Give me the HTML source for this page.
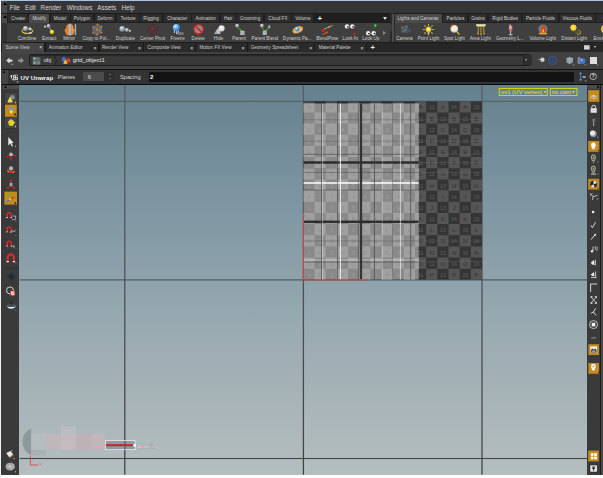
<!DOCTYPE html><html><head><meta charset="utf-8"><title>Houdini UV Unwrap</title><style>
html,body{margin:0;padding:0;}
body{width:603px;height:478px;overflow:hidden;background:#3a3a3a;position:relative;
 font-family:"Liberation Sans","DejaVu Sans",sans-serif;color:#cfcfcf;}
.a{position:absolute;}
.t{position:absolute;white-space:nowrap;line-height:1;}
.tab{position:absolute;top:14.2px;height:7.9px;background:#2d2d2d;border-radius:1.2px 1.2px 0 0;}
.tab.on{background:#4a4a4a;height:9px;}
.tab span,.ptab span,.lbl{position:absolute;white-space:nowrap;line-height:1;left:50%;transform:translateX(-50%);}
.tab span{top:2.7px;font-size:4.6px;color:#d2d2d2;}
.lbl{font-size:4.6px;color:#d0d0d0;top:36.7px;}
.ptab{position:absolute;top:43.2px;height:8.4px;background:#2b2b2b;box-shadow:-.9px 0 0 #1a1a1a, .9px 0 0 #1a1a1a;}
.ptab.on{background:#454545;top:42.6px;height:9.6px}
.ptab span{top:3.2px;font-size:4.6px;color:#cfcfcf;left:4px;transform:none;}
.ptab i{position:absolute;top:2.3px;font-size:5px;font-style:normal;color:#e8e8e8;line-height:1;margin-left:.3px;margin-top:.2px}
</style></head><body>
<div class="a" style="left:0;top:0;width:603px;height:1px;background:#a9c3e6"></div>
<div class="a" style="left:0;top:0;width:1.3px;height:478px;background:#e8e8e8"></div>
<div class="a" style="left:2px;top:1px;width:601px;height:12px;background:#353535"></div>
<div class="a" style="left:2px;top:1px;width:5px;height:12px;background:#4a4a4a"></div>
<div class="a" style="left:2.7px;top:2px;width:0;height:0;border-left:2px solid transparent;border-right:2px solid transparent;border-bottom:3.2px solid #000"></div>
<div class="a" style="left:14.72px;top:0;width:0;height:0"><span class="lbl" style="top:4.9px;font-size:6.3px;color:#d8d8d8">File</span></div>
<div class="a" style="left:30.40px;top:0;width:0;height:0"><span class="lbl" style="top:4.9px;font-size:6.3px;color:#d8d8d8">Edit</span></div>
<div class="a" style="left:50.95px;top:0;width:0;height:0"><span class="lbl" style="top:4.9px;font-size:6.3px;color:#d8d8d8">Render</span></div>
<div class="a" style="left:79.55px;top:0;width:0;height:0"><span class="lbl" style="top:4.9px;font-size:6.3px;color:#d8d8d8">Windows</span></div>
<div class="a" style="left:106.75px;top:0;width:0;height:0"><span class="lbl" style="top:4.9px;font-size:6.3px;color:#d8d8d8">Assets</span></div>
<div class="a" style="left:128.05px;top:0;width:0;height:0"><span class="lbl" style="top:4.9px;font-size:6.3px;color:#d8d8d8">Help</span></div>
<div class="a" style="left:2px;top:12.6px;width:601px;height:1.4px;background:#1c1c1c"></div>
<div class="a" style="left:2px;top:14px;width:601px;height:8.6px;background:#1f1f1f"></div>
<div class="a" style="left:2px;top:14px;width:5px;height:9px;background:#4a4a4a"></div>
<div class="a" style="left:2.7px;top:14.8px;width:0;height:0;border-left:2px solid transparent;border-right:2px solid transparent;border-bottom:3.2px solid #000"></div>
<div class="a" style="left:2px;top:23px;width:601px;height:19px;background:#3f3f3f"></div>
<div class="a" style="left:2px;top:23px;width:5.4px;height:19px;background:#323232"></div>
<div class="tab" style="left:8.4px;width:19.6px"><span>Create</span></div>
<div class="tab on" style="left:29.2px;width:20.2px"><span>Modify</span></div>
<div class="tab" style="left:50.6px;width:19.0px"><span>Model</span></div>
<div class="tab" style="left:70.8px;width:22.6px"><span>Polygon</span></div>
<div class="tab" style="left:94.6px;width:20.8px"><span>Deform</span></div>
<div class="tab" style="left:117.4px;width:21.5px"><span>Texture</span></div>
<div class="tab" style="left:140.2px;width:21.9px"><span>Rigging</span></div>
<div class="tab" style="left:164.1px;width:26.5px"><span>Character</span></div>
<div class="tab" style="left:192.2px;width:27.0px"><span>Animation</span></div>
<div class="tab" style="left:221px;width:14.5px"><span>Hair</span></div>
<div class="tab" style="left:236.9px;width:26.5px"><span>Grooming</span></div>
<div class="tab" style="left:264.8px;width:26.2px"><span>Cloud FX</span></div>
<div class="tab" style="left:292.2px;width:21.3px"><span>Volume</span></div>
<div class="t" style="left:317.6px;top:14.5px;font-size:8px;color:#eee;font-weight:bold">+</div>
<div class="a" style="left:382.5px;top:17px;width:0;height:0;border-left:2px solid transparent;border-right:2px solid transparent;border-top:3px solid #ddd"></div>
<div class="a" style="left:390px;top:13px;width:5px;height:30px;background:#2a2a2a"></div>
<div class="a" style="left:391.5px;top:14px;width:2px;height:28px;background:#4c4c4c"></div>
<div class="tab on" style="left:394.5px;width:47.2px"><span>Lights and Cameras</span></div>
<div class="tab" style="left:443.3px;width:24.2px"><span>Particles</span></div>
<div class="tab" style="left:468.9px;width:18.3px"><span>Grains</span></div>
<div class="tab" style="left:489px;width:32.4px"><span>Rigid Bodies</span></div>
<div class="tab" style="left:522.8px;width:35.2px"><span>Particle Fluids</span></div>
<div class="tab" style="left:559.6px;width:35.2px"><span>Viscous Fluids</span></div>
<div class="tab" style="left:596.4px;width:28.6px"><span>Oceans</span></div>
<div class="a" style="left:27.15px;top:0;width:0;height:0"><span class="lbl">Combine</span></div>
<div class="a" style="left:49.05px;top:0;width:0;height:0"><span class="lbl">Extract</span></div>
<div class="a" style="left:69.15px;top:0;width:0;height:0"><span class="lbl">Mirror</span></div>
<div class="a" style="left:96.3px;top:0;width:0;height:0"><span class="lbl">Copy to Poi...</span></div>
<div class="a" style="left:125.45px;top:0;width:0;height:0"><span class="lbl">Duplicate</span></div>
<div class="a" style="left:152.6px;top:0;width:0;height:0"><span class="lbl">Center Pivot</span></div>
<div class="a" style="left:177.55px;top:0;width:0;height:0"><span class="lbl">Freeze</span></div>
<div class="a" style="left:198.25px;top:0;width:0;height:0"><span class="lbl">Delete</span></div>
<div class="a" style="left:218.55px;top:0;width:0;height:0"><span class="lbl">Hide</span></div>
<div class="a" style="left:239.05px;top:0;width:0;height:0"><span class="lbl">Parent</span></div>
<div class="a" style="left:264.8px;top:0;width:0;height:0"><span class="lbl">Parent Blend</span></div>
<div class="a" style="left:297.15px;top:0;width:0;height:0"><span class="lbl">Dynamic Pa...</span></div>
<div class="a" style="left:327.25px;top:0;width:0;height:0"><span class="lbl">BlendPose</span></div>
<div class="a" style="left:350.25px;top:0;width:0;height:0"><span class="lbl">Look At</span></div>
<div class="a" style="left:370.85px;top:0;width:0;height:0"><span class="lbl">Look Up</span></div>
<div class="a" style="left:404.45px;top:0;width:0;height:0"><span class="lbl">Camera</span></div>
<div class="a" style="left:428.55px;top:0;width:0;height:0"><span class="lbl">Point Light</span></div>
<div class="a" style="left:454.45px;top:0;width:0;height:0"><span class="lbl">Spot Light</span></div>
<div class="a" style="left:480.25px;top:0;width:0;height:0"><span class="lbl">Area Light</span></div>
<div class="a" style="left:509.85px;top:0;width:0;height:0"><span class="lbl">Geometry L...</span></div>
<div class="a" style="left:542.7px;top:0;width:0;height:0"><span class="lbl">Volume Light</span></div>
<div class="a" style="left:574.15px;top:0;width:0;height:0"><span class="lbl">Distant Light</span></div>
<div class="a" style="left:612px;top:0;width:0;height:0"><span class="lbl">Environment Light</span></div>
<svg class="a" style="left:0;top:0" width="603" height="44" viewBox="0 0 603 44">
<defs><radialGradient id="gs" cx=".35" cy=".3" r=".8"><stop offset="0" stop-color="#e8ecee"/><stop offset=".55" stop-color="#9aa2a6"/><stop offset="1" stop-color="#5a6064"/></radialGradient><radialGradient id="ys" cx=".35" cy=".3" r=".8"><stop offset="0" stop-color="#fff8a0"/><stop offset=".6" stop-color="#e8d020"/><stop offset="1" stop-color="#9a8400"/></radialGradient><radialGradient id="bs" cx=".35" cy=".3" r=".8"><stop offset="0" stop-color="#d8f0ff"/><stop offset=".55" stop-color="#4aa0e8"/><stop offset="1" stop-color="#1c58a8"/></radialGradient><radialGradient id="ws" cx=".4" cy=".35" r=".8"><stop offset="0" stop-color="#fff"/><stop offset=".7" stop-color="#d8d8d8"/><stop offset="1" stop-color="#888"/></radialGradient><radialGradient id="pl" cx=".5" cy=".5" r=".5"><stop offset="0" stop-color="#fffff0"/><stop offset=".5" stop-color="#f0e050"/><stop offset="1" stop-color="#c8a818"/></radialGradient></defs>
<ellipse cx="27.4" cy="30.9" rx="5.5" ry="2.7" fill="none" stroke="#d8c018" stroke-width=".9"/><circle cx="25.6" cy="28.6" r="2.6" fill="url(#gs)"/><path d="M28.4 30 L30.2 26.4 L31.8 30.2Z" fill="#d0d4d8"/><path d="M22.2 31.6 A5.5 2.7 0 0 0 32.6 31.6" fill="none" stroke="#f0d820" stroke-width="1"/><path d="M28.8 32.6 L31.8 34 L30.4 31.8Z" fill="#e0e0e0"/>
<path d="M48.6 26.4 L52 31.8" stroke="#a8a8a8" stroke-width=".9"/><circle cx="45.2" cy="26.8" r="1.3" fill="url(#gs)"/><circle cx="48.6" cy="26" r="1.9" fill="url(#gs)"/><circle cx="52" cy="32" r="2.3" fill="url(#ys)" stroke="#5a4c00" stroke-width=".3"/>
<path d="M68.8 24 C66.6 24.6 65.6 26.4 66.4 28 C64.2 29 64 31 65.6 32.2 C65 33.8 66.6 35 68.8 35.2Z" fill="#e8822a"/><rect x="68.6" y="23.8" width="2.7" height="11.5" fill="#c8ccd0"/><rect x="69.7" y="23.8" width=".7" height="11.5" fill="#8a9094"/><path d="M71.2 24 C73 24.6 73.8 26.4 73.2 28 C75 29 75 31 73.8 32.2 C74.2 33.8 73 35 71.2 35.2Z" fill="#f09436"/><rect x="74.7" y="24.2" width="1.5" height="10.8" fill="#a8acb0"/>
<path d="M93 27 L97.6 24.6 L101.6 26.6 V32.6 L97 35 L93 32.8Z" fill="#5e6266" stroke="#8a8e92" stroke-width=".5"/><path d="M93 27 L97 29 L101.6 26.6 M97 29 V35" stroke="#8a8e92" stroke-width=".5" fill="none"/>
<circle cx="93" cy="27" r=".8" fill="#ee8a1c"/>
<circle cx="97.6" cy="24.4" r=".8" fill="#ee8a1c"/>
<circle cx="101.6" cy="26.6" r=".8" fill="#ee8a1c"/>
<circle cx="101.6" cy="32.6" r=".8" fill="#ee8a1c"/>
<circle cx="97" cy="35" r=".8" fill="#ee8a1c"/>
<circle cx="93" cy="32.8" r=".8" fill="#ee8a1c"/>
<circle cx="97" cy="29.4" r=".8" fill="#ee8a1c"/>
<circle cx="99.4" cy="30.6" r=".8" fill="#ee8a1c"/>
<circle cx="122.3" cy="28.9" r="2.9" fill="url(#gs)"/><circle cx="127" cy="30" r="2" fill="url(#gs)"/><circle cx="130" cy="31" r="1.2" fill="url(#gs)"/>
<g stroke="#702020" stroke-width=".65" fill="none"><circle cx="152.8" cy="29.6" r="5"/><path d="M152.8 24.6V34.6M147.8 29.6H157.8" stroke-dasharray="1 .8"/><ellipse cx="152.8" cy="29.6" rx="2.4" ry="5" opacity=".6"/></g><circle cx="152.4" cy="29" r=".9" fill="#b82a2a"/>
<circle cx="176.4" cy="27.7" r="3.6" fill="url(#bs)"/><path d="M174.4 30.4V33M176.6 31V34M178.4 30.6V32.6" stroke="#e8f4ff" stroke-width=".8"/><text x="177" y="35" font-size="3.2" fill="#9a9a9a" font-family="Liberation Sans, sans-serif" font-weight="bold">RBS</text>
<circle cx="198.6" cy="29.3" r="4.7" fill="#8c8c8c" stroke="#d81e1e" stroke-width="1.3"/><path d="M195.2 26 L202 32.6" stroke="#d81e1e" stroke-width="1.5"/>
<path d="M214 34 L218 27.6 L221 34Z" fill="#a8acae"/><circle cx="221.6" cy="28.4" r="3.1" fill="url(#ws)"/><circle cx="218.4" cy="31.6" r="1.8" fill="#c8c8c8" opacity=".8"/>
<path d="M237.6 27 C238.4 30.2 241.4 28.6 242.4 31.4" stroke="#52b424" stroke-width="1" fill="none"/><circle cx="237.2" cy="25.8" r="2" fill="url(#gs)"/><rect x="240.6" y="31" width="3.6" height="3.8" fill="#a8b0b6" stroke="#d0d6da" stroke-width=".4"/>
<path d="M262.2 27 C262.6 30 264.8 29.4 264.8 31.4 M269 28 C268.6 30 265.4 29.4 264.8 31.4" stroke="#52b424" stroke-width="1" fill="none"/><circle cx="262" cy="25.8" r="2" fill="url(#gs)"/><path d="M267.6 27.8 L269.2 24.6 L270.8 27.8Z" fill="#b0b6ba"/><rect x="263" y="31" width="3.6" height="3.8" fill="#a8b0b6" stroke="#d0d6da" stroke-width=".4"/>
<ellipse cx="297.8" cy="29.8" rx="5.6" ry="3.3" transform="rotate(-22 297.8 29.8)" fill="#e8a648"/><ellipse cx="297.8" cy="30.2" rx="3.6" ry="1.8" transform="rotate(-22 297.8 29.8)" fill="#f8d8a0" opacity=".7"/><circle cx="297.2" cy="29.2" r="2.3" fill="url(#bs)"/>
<path d="M324 29.2 L332.6 25.4" stroke="#d8a050" stroke-width=".9"/><circle cx="329" cy="27" r=".7" fill="#e8c080"/><circle cx="323" cy="30.6" r="1.6" fill="#d82020"/><path d="M322.4 34.6 L327.6 32 L326.4 31 M327.6 32 L326 33.6" stroke="#e85a10" stroke-width="1" fill="none"/>
<path d="M347 27 L354.4 33.8 L352.3 27" stroke="#7a2424" stroke-width=".5" fill="none"/><circle cx="347" cy="26.4" r="2.2" fill="#f2f2f2"/><circle cx="352.3" cy="26.4" r="2.2" fill="#f2f2f2"/><circle cx="347.8" cy="26.8" r=".9" fill="#222"/><circle cx="353.1" cy="26.8" r=".9" fill="#222"/><path d="M354.4 32.4l1.1 1.4l-1.1 1.4l-1.1-1.4z" fill="#e82828"/>
<path d="M370.8 32 L375.3 25.6" stroke="#3a9a2a" stroke-width=".5" stroke-dasharray="1 .7"/><path d="M375.3 23.8l1.6 1.7l-1.6 1.7l-1.6-1.7z" fill="#38d038"/><circle cx="368.2" cy="33.2" r="2.2" fill="#f2f2f2"/><circle cx="373.7" cy="33.2" r="2.2" fill="#f2f2f2"/><circle cx="369" cy="33.6" r=".9" fill="#222"/><circle cx="374.5" cy="33.6" r=".9" fill="#222"/>
<rect x="401" y="28" width="7" height="5" rx="1" fill="#4a5560"/><circle cx="402.6" cy="27.4" r="1.7" fill="#56626e"/><circle cx="406.2" cy="27" r="2" fill="#56626e"/><path d="M408 29.4 L410.4 28 V33 L408 31.8Z" fill="#4a5560"/><circle cx="405" cy="30.4" r=".7" fill="#9ab0c0"/><circle cx="403" cy="31.6" r=".5" fill="#8aa0b0"/>
<path d="M431.5 29.5L433.7 29.5" stroke="#d8c030" stroke-width=".7"/><circle cx="433.7" cy="29.5" r=".6" fill="#e8d040"/>
<path d="M430.6 31.6L432.2 33.2" stroke="#d8c030" stroke-width=".7"/><circle cx="432.2" cy="33.2" r=".6" fill="#e8d040"/>
<path d="M428.5 32.5L428.5 34.7" stroke="#d8c030" stroke-width=".7"/><circle cx="428.5" cy="34.7" r=".6" fill="#e8d040"/>
<path d="M426.4 31.6L424.8 33.2" stroke="#d8c030" stroke-width=".7"/><circle cx="424.8" cy="33.2" r=".6" fill="#e8d040"/>
<path d="M425.5 29.5L423.3 29.5" stroke="#d8c030" stroke-width=".7"/><circle cx="423.3" cy="29.5" r=".6" fill="#e8d040"/>
<path d="M426.4 27.4L424.8 25.8" stroke="#d8c030" stroke-width=".7"/><circle cx="424.8" cy="25.8" r=".6" fill="#e8d040"/>
<path d="M428.5 26.5L428.5 24.3" stroke="#d8c030" stroke-width=".7"/><circle cx="428.5" cy="24.3" r=".6" fill="#e8d040"/>
<path d="M430.6 27.4L432.2 25.8" stroke="#d8c030" stroke-width=".7"/><circle cx="432.2" cy="25.8" r=".6" fill="#e8d040"/>
<circle cx="428.5" cy="29.3" r="2.9" fill="url(#pl)"/><rect x="427.4" y="32.2" width="2.2" height="1.6" fill="#c8c8b0"/>
<path d="M455.6 30.4 L459.6 34.6" stroke="#f0d020" stroke-width="1.1"/><circle cx="454.3" cy="28.9" r="3.8" fill="url(#ws)"/><path d="M450.8 27.6 A3.8 3.8 0 0 1 454 25.1" stroke="#f08a20" stroke-width="1.2" fill="none"/><circle cx="454.6" cy="29.2" r="1.6" fill="#f8f0c0"/><path d="M451.6 31.6 A3.8 3.8 0 0 0 456 32.4" stroke="#777" stroke-width=".8" fill="none"/>
<path d="M475.8 24.3 H486 L485 26.4 H476.8Z" fill="#f4ecb0"/><path d="M478.4 26.6 L478 33.6 M481 26.6 V34.4 M483.6 26.6 L484 33.6" stroke="#d8b830" stroke-width=".8"/><circle cx="478" cy="33.8" r=".7" fill="#e8c838"/><circle cx="481" cy="34.6" r=".7" fill="#e8c838"/><circle cx="484" cy="33.8" r=".7" fill="#e8c838"/>
<ellipse cx="510.6" cy="28.4" rx="2.3" ry="4.2" fill="#7a3a8a"/><ellipse cx="510.2" cy="27.6" rx="1.2" ry="2.6" fill="#e8e0d0" opacity=".7"/><path d="M509.6 24.6 C512.6 26.6 512 30 510 32" stroke="#f0c830" stroke-width="1" fill="none"/><circle cx="511.2" cy="29.6" r="1" fill="#f07020"/><path d="M510.6 31.4 V34.6 M508.8 34.8 H512.4" stroke="#e8e8e8" stroke-width=".8"/>
<circle cx="543" cy="29" r="4.6" fill="#8a8e92" opacity=".75"/><ellipse cx="543" cy="33.6" rx="4.4" ry="1" fill="#e8a020"/><path d="M543 24.8 C545.4 27.4 545.8 29.4 545 31.6 C544.4 33.2 541.6 33.2 541 31.6 C540.2 29.6 542 28.6 543 24.8Z" fill="#e83a18"/><path d="M543 28.4 C544.2 30 544.2 31 543.8 32 C543.4 32.8 542.4 32.8 542.2 32 C541.8 30.8 542.6 30.2 543 28.4Z" fill="#f8c030"/>
<polygon points="577.1,27.7 576.0,28.8 576.0,30.3 574.5,30.3 573.4,31.4 572.3,30.3 570.8,30.3 570.8,28.8 569.7,27.7 570.8,26.6 570.8,25.1 572.3,25.1 573.4,24.0 574.5,25.1 576.0,25.1 576.0,26.6" fill="#e8c020"/><circle cx="573.2" cy="27.5" r="2.2" fill="#f8e060"/>
<path d="M575.4 31.6 L578 34.6 M576.8 30.4 L580 33.8 M578 29 L580.8 32" stroke="#c8a820" stroke-width=".6"/><circle cx="578" cy="34.6" r=".6" fill="#e8c838"/><circle cx="580" cy="33.8" r=".6" fill="#e8c838"/><circle cx="580.8" cy="32" r=".6" fill="#e8c838"/>
<circle cx="606" cy="29" r="5" fill="#e8c848"/>
<path d="M390.9 24.4V31" stroke="#5a5a5a" stroke-width="1.4" stroke-dasharray="1 1"/>
</svg>
<div class="a" style="left:382.5px;top:31px;width:0;height:0;border-top:2.5px solid transparent;border-bottom:2.5px solid transparent;border-left:3.5px solid #8a8a8a"></div>
<div class="a" style="left:2px;top:41.6px;width:601px;height:1.2px;background:#1c1c1c"></div>
<div class="a" style="left:2px;top:42.8px;width:601px;height:9.4px;background:#262626"></div>
<div class="ptab on" style="left:2px;width:42.3px"><span style="left:3.5px">Scene View</span><i style="left:36.9px">×</i></div>
<div class="ptab" style="left:45.6px;width:52.8px"><span style="left:3.2px">Animation Editor</span><i style="left:47.6px">×</i></div>
<div class="ptab" style="left:99.6px;width:43.6px"><span style="left:2.4px">Render View</span><i style="left:38.1px">×</i></div>
<div class="ptab" style="left:144.4px;width:50.8px"><span style="left:3.2px">Composite View</span><i style="left:45.5px">×</i></div>
<div class="ptab" style="left:196.4px;width:50.2px"><span style="left:3.0px">Motion FX View</span><i style="left:44.7px">×</i></div>
<div class="ptab" style="left:247.8px;width:66.4px"><span style="left:2.9px">Geometry Spreadsheet</span><i style="left:61.1px">×</i></div>
<div class="ptab" style="left:315.4px;width:50.2px"><span style="left:3.3px">Material Palette</span><i style="left:44.7px">×</i></div>
<div class="t" style="left:370.4px;top:44px;font-size:7.5px;color:#eee;font-weight:bold">+</div>
<svg class="a" style="left:583px;top:44px" width="8" height="7" viewBox="0 0 8 7"><rect x="1" y="1.3" width="5.6" height="4.2" fill="#e8e8e8"/><path d="M1 2.7h5.6M1 4.1h5.6" stroke="#999" stroke-width=".4"/></svg>
<div class="a" style="left:594.3px;top:45.9px;width:0;height:0;border-left:1.7px solid transparent;border-right:1.7px solid transparent;border-top:2.3px solid #e0e0e0"></div>
<div class="a" style="left:2px;top:52px;width:601px;height:17px;background:#414141"></div>
<div class="a" style="left:2px;top:51.5px;width:42.3px;height:2px;background:#454545"></div>
<div class="a" style="left:29.4px;top:54.4px;width:502px;height:11.6px;background:#393939;border:0.8px solid #1f1f1f;border-radius:2px;box-sizing:border-box;box-shadow:inset 0 1px 1px rgba(0,0,0,.35)"></div>
<div class="a" style="left:522.6px;top:55.2px;width:8.2px;height:10px;background:#2e2e2e;border-left:.6px solid #222"></div>
<div class="a" style="left:525.4px;top:59.2px;width:0;height:0;border-left:1.9px solid transparent;border-right:1.9px solid transparent;border-top:2.4px solid #aaa"></div>
<svg class="a" style="left:4px;top:55px" width="24" height="12" viewBox="0 0 24 12"><path d="M2.2 5.6 L5.6 2.6 V4.4 H8.4 V6.8 H5.6 V8.6 Z" fill="#d8d8d8"/><path d="M7.6 8.2 L9.2 9.2 L7.6 10.2Z" fill="#bbb"/><path d="M20 5.6 L16.6 2.6 V4.4 H14 V6.8 H16.6 V8.6 Z" fill="#8e8e8e"/></svg>
<svg class="a" style="left:32px;top:56px" width="10" height="10" viewBox="0 0 10 10"><rect x=".8" y="1.2" width="7.6" height="7.6" fill="#5d6a6a"/><rect x="1.2" y="1.4" width="2.2" height="2" fill="#9fb0b0"/><rect x="1.2" y="5.6" width="2.4" height="2.4" fill="#8fa0a0"/><rect x="5" y="5.8" width="2.8" height="2" fill="#7d8c8c"/><path d="M3.6 2.4H6.4" stroke="#aaa" stroke-width=".5" stroke-dasharray=".8 .6"/></svg>
<div class="t" style="left:43.8px;top:57.6px;font-size:5.5px;color:#e0e0e0">obj</div>
<svg class="a" style="left:53px;top:54.5px" width="5" height="12" viewBox="0 0 5 12"><path d="M1.4 .8 L3.6 5.8 L1.4 10.8" fill="none" stroke="#1c1c1c" stroke-width=".8"/></svg>
<svg class="a" style="left:61px;top:56px" width="11" height="10" viewBox="0 0 11 10"><rect x="1" y="1.2" width="3.6" height="4.4" fill="#3f6fd0"/><circle cx="7.2" cy="4.6" r="2.2" fill="#e03a2a"/><path d="M4.4 3.2 L6.6 7.8 H2.2Z" fill="#f2d428"/></svg>
<div class="t" style="left:72.8px;top:57.5px;font-size:5.85px;color:#ececec">grid_object1</div>
<svg class="a" style="left:536px;top:55px" width="66" height="12" viewBox="0 0 66 12"><path d="M2.6 4.6H5.2M5.2 2.6V6.8M5.2 3.2H8V6.2H5.2" stroke="#d8d8d8" stroke-width=".8" fill="#d8d8d8"/><circle cx="16.4" cy="5.4" r="4" fill="#2c3442" stroke="#4a6db0" stroke-width=".7"/><circle cx="16.4" cy="5.4" r="2.3" fill="none" stroke="#4a6db0" stroke-width=".6"/><circle cx="16.4" cy="5.4" r=".8" fill="#4a6db0"/><path d="M30.4 3.2 L33.8 1.8 L37 3.2 V7.4 L33.6 9 L30.4 7.4Z" fill="#8a98a8"/><path d="M30.4 3.2 L33.6 4.6 L37 3.2 M33.6 4.6 V9" stroke="#c8d0d8" stroke-width=".5" fill="none"/><path d="M36.4 9.4h2.2l-1.1 1.2z" fill="#aaa"/><rect x="41.6" y="2" width="3" height="7" rx="1.2" fill="#8a8a8a"/><circle cx="46.4" cy="6" r="3" fill="#3f78d8"/><circle cx="45.6" cy="5" r="1" fill="#9cc0f4"/><path d="M48.2 9.4h2.2l-1.1 1.2z" fill="#aaa"/><rect x="54" y="2" width="7" height="7" fill="#dcdcdc"/><path d="M60.4 9.4h2l-1 1.2z" fill="#aaa"/></svg>
<div class="a" style="left:2px;top:68.6px;width:601px;height:1.2px;background:#121212"></div>
<div class="a" style="left:2px;top:69.8px;width:601px;height:14.1px;background:#333"></div>
<div class="a" style="left:2px;top:69.8px;width:5.6px;height:14.1px;background:#454545"></div>
<div class="a" style="left:3px;top:70.2px;width:0;height:0;border-left:1.9px solid transparent;border-right:1.9px solid transparent;border-bottom:3px solid #000"></div>
<svg class="a" style="left:9px;top:72.6px" width="11" height="11" viewBox="0 0 11 11"><path d="M1.4 3H3.4M2.4 2V5.4M4.6 2.2H6.6V4.4H8.6V6.6H6.6V4.4H4.6Z M4.6 4.4V6.8H6.4" stroke="#ececec" stroke-width=".9" fill="none"/><path d="M3 5.6L4.4 7.4M7.6 1.6L8.8 3" stroke="#ececec" stroke-width=".8"/><path d="M7.4 8.6h2.4l-1.2 1.4z" fill="#bbb"/></svg>
<div class="t" style="left:20.6px;top:74.7px;font-size:6.1px;font-weight:bold;color:#f4f4f4">UV Unwrap</div>
<div class="t" style="left:57.8px;top:75px;font-size:5.7px;color:#d4d4d4">Planes</div>
<div class="a" style="left:82.5px;top:71.9px;width:32.5px;height:9.4px;background:#2f2f2f;border-radius:1px"></div>
<div class="a" style="left:82.5px;top:71.9px;width:21.6px;height:9.4px;background:#4b4b4b;border-radius:1px 0 0 1px"></div>
<div class="t" style="left:87.7px;top:74.4px;font-size:6px;color:#d8d8d8">6</div>
<div class="a" style="left:108.9px;top:73.8px;width:0;height:0;border-left:1.1px solid transparent;border-right:1.1px solid transparent;border-bottom:1.8px solid #9a9a9a"></div>
<div class="a" style="left:108.9px;top:77.6px;width:0;height:0;border-left:1.1px solid transparent;border-right:1.1px solid transparent;border-top:1.8px solid #9a9a9a"></div>
<div class="t" style="left:120px;top:75px;font-size:5.7px;color:#d4d4d4">Spacing</div>
<div class="a" style="left:148.9px;top:72px;width:425px;height:9.6px;background:#131313;border-radius:1px"></div>
<div class="t" style="left:150px;top:74.3px;font-size:6px;color:#fff;font-weight:bold">2</div>
<svg class="a" style="left:576px;top:71px" width="24" height="12" viewBox="0 0 24 12"><path d="M4.6 1.6V9.6M3.4 3.2L4.6 1.4L5.8 3.2M3.4 8L4.6 9.8L5.8 8" stroke="#5b8fe0" stroke-width=".8" fill="none"/><rect x="6.6" y="5.4" width="3" height="1.2" fill="#e8e8e8"/><path d="M8.6 9.6h2.2l-1.1 1.2z" fill="#aaa"/><circle cx="17.2" cy="5.4" r="3.2" fill="#2a2a2a" stroke="#d0d0d0" stroke-width=".8"/><text x="17.2" y="7.2" font-size="4.6" font-weight="bold" text-anchor="middle" fill="#e8e8e8" font-family="Liberation Sans, sans-serif">?</text></svg>
<div class="a" style="left:2px;top:83.9px;width:601px;height:1px;background:#0a0a0a"></div>
<div class="a" style="left:19.4px;top:84.75px;width:567.8px;height:390px;background:linear-gradient(#66818e 0%,#7d96a2 30%,#99aab1 62%,#b5bebf 100%)"></div>
<svg class="a" style="left:0;top:0" width="603" height="478" viewBox="0 0 603 478" font-family="Liberation Sans, sans-serif">
<defs><clipPath id="vp"><rect x="19.4" y="85" width="567.8" height="389.7"/></clipPath><clipPath id="tile"><rect x="303.4" y="100.8" width="178.6" height="178.9"/></clipPath><clipPath id="lt"><rect x="303.4" y="103.5" width="115.45000000000005" height="176.1"/></clipPath></defs>
<g clip-path="url(#vp)">
<linearGradient id="gv" x1="0" y1="85" x2="0" y2="475" gradientUnits="userSpaceOnUse"><stop offset="0" stop-color="#555e66"/><stop offset="1" stop-color="#434445"/></linearGradient>
<rect x="124.15" y="84" width="1.3" height="392" fill="url(#gv)"/>
<rect x="302.75" y="84" width="1.3" height="392" fill="url(#gv)"/>
<rect x="481.35" y="84" width="1.3" height="392" fill="url(#gv)"/>
<rect x="19.4" y="100.75" width="568" height="1.1" fill="#545d65"/>
<rect x="19.4" y="279.35" width="568" height="1.1" fill="#4b5055"/>
<rect x="19.4" y="457.95" width="568" height="1.1" fill="#444546"/>
<g clip-path="url(#tile)">
<rect x="303.4" y="101.3" width="178.6" height="178.6" fill="#353535"/>
<path d="M303.40 101.30h11.16v11.16h-11.16zM325.72 101.30h11.16v11.16h-11.16zM348.05 101.30h11.16v11.16h-11.16zM370.38 101.30h11.16v11.16h-11.16zM392.70 101.30h11.16v11.16h-11.16zM415.02 101.30h11.16v11.16h-11.16zM437.35 101.30h11.16v11.16h-11.16zM459.67 101.30h11.16v11.16h-11.16zM314.56 112.46h11.16v11.16h-11.16zM336.89 112.46h11.16v11.16h-11.16zM359.21 112.46h11.16v11.16h-11.16zM381.54 112.46h11.16v11.16h-11.16zM403.86 112.46h11.16v11.16h-11.16zM426.19 112.46h11.16v11.16h-11.16zM448.51 112.46h11.16v11.16h-11.16zM470.84 112.46h11.16v11.16h-11.16zM303.40 123.62h11.16v11.16h-11.16zM325.72 123.62h11.16v11.16h-11.16zM348.05 123.62h11.16v11.16h-11.16zM370.38 123.62h11.16v11.16h-11.16zM392.70 123.62h11.16v11.16h-11.16zM415.02 123.62h11.16v11.16h-11.16zM437.35 123.62h11.16v11.16h-11.16zM459.67 123.62h11.16v11.16h-11.16zM314.56 134.79h11.16v11.16h-11.16zM336.89 134.79h11.16v11.16h-11.16zM359.21 134.79h11.16v11.16h-11.16zM381.54 134.79h11.16v11.16h-11.16zM403.86 134.79h11.16v11.16h-11.16zM426.19 134.79h11.16v11.16h-11.16zM448.51 134.79h11.16v11.16h-11.16zM470.84 134.79h11.16v11.16h-11.16zM303.40 145.95h11.16v11.16h-11.16zM325.72 145.95h11.16v11.16h-11.16zM348.05 145.95h11.16v11.16h-11.16zM370.38 145.95h11.16v11.16h-11.16zM392.70 145.95h11.16v11.16h-11.16zM415.02 145.95h11.16v11.16h-11.16zM437.35 145.95h11.16v11.16h-11.16zM459.67 145.95h11.16v11.16h-11.16zM314.56 157.11h11.16v11.16h-11.16zM336.89 157.11h11.16v11.16h-11.16zM359.21 157.11h11.16v11.16h-11.16zM381.54 157.11h11.16v11.16h-11.16zM403.86 157.11h11.16v11.16h-11.16zM426.19 157.11h11.16v11.16h-11.16zM448.51 157.11h11.16v11.16h-11.16zM470.84 157.11h11.16v11.16h-11.16zM303.40 168.27h11.16v11.16h-11.16zM325.72 168.27h11.16v11.16h-11.16zM348.05 168.27h11.16v11.16h-11.16zM370.38 168.27h11.16v11.16h-11.16zM392.70 168.27h11.16v11.16h-11.16zM415.02 168.27h11.16v11.16h-11.16zM437.35 168.27h11.16v11.16h-11.16zM459.67 168.27h11.16v11.16h-11.16zM314.56 179.44h11.16v11.16h-11.16zM336.89 179.44h11.16v11.16h-11.16zM359.21 179.44h11.16v11.16h-11.16zM381.54 179.44h11.16v11.16h-11.16zM403.86 179.44h11.16v11.16h-11.16zM426.19 179.44h11.16v11.16h-11.16zM448.51 179.44h11.16v11.16h-11.16zM470.84 179.44h11.16v11.16h-11.16zM303.40 190.60h11.16v11.16h-11.16zM325.72 190.60h11.16v11.16h-11.16zM348.05 190.60h11.16v11.16h-11.16zM370.38 190.60h11.16v11.16h-11.16zM392.70 190.60h11.16v11.16h-11.16zM415.02 190.60h11.16v11.16h-11.16zM437.35 190.60h11.16v11.16h-11.16zM459.67 190.60h11.16v11.16h-11.16zM314.56 201.76h11.16v11.16h-11.16zM336.89 201.76h11.16v11.16h-11.16zM359.21 201.76h11.16v11.16h-11.16zM381.54 201.76h11.16v11.16h-11.16zM403.86 201.76h11.16v11.16h-11.16zM426.19 201.76h11.16v11.16h-11.16zM448.51 201.76h11.16v11.16h-11.16zM470.84 201.76h11.16v11.16h-11.16zM303.40 212.93h11.16v11.16h-11.16zM325.72 212.93h11.16v11.16h-11.16zM348.05 212.93h11.16v11.16h-11.16zM370.38 212.93h11.16v11.16h-11.16zM392.70 212.93h11.16v11.16h-11.16zM415.02 212.93h11.16v11.16h-11.16zM437.35 212.93h11.16v11.16h-11.16zM459.67 212.93h11.16v11.16h-11.16zM314.56 224.09h11.16v11.16h-11.16zM336.89 224.09h11.16v11.16h-11.16zM359.21 224.09h11.16v11.16h-11.16zM381.54 224.09h11.16v11.16h-11.16zM403.86 224.09h11.16v11.16h-11.16zM426.19 224.09h11.16v11.16h-11.16zM448.51 224.09h11.16v11.16h-11.16zM470.84 224.09h11.16v11.16h-11.16zM303.40 235.25h11.16v11.16h-11.16zM325.72 235.25h11.16v11.16h-11.16zM348.05 235.25h11.16v11.16h-11.16zM370.38 235.25h11.16v11.16h-11.16zM392.70 235.25h11.16v11.16h-11.16zM415.02 235.25h11.16v11.16h-11.16zM437.35 235.25h11.16v11.16h-11.16zM459.67 235.25h11.16v11.16h-11.16zM314.56 246.41h11.16v11.16h-11.16zM336.89 246.41h11.16v11.16h-11.16zM359.21 246.41h11.16v11.16h-11.16zM381.54 246.41h11.16v11.16h-11.16zM403.86 246.41h11.16v11.16h-11.16zM426.19 246.41h11.16v11.16h-11.16zM448.51 246.41h11.16v11.16h-11.16zM470.84 246.41h11.16v11.16h-11.16zM303.40 257.57h11.16v11.16h-11.16zM325.72 257.57h11.16v11.16h-11.16zM348.05 257.57h11.16v11.16h-11.16zM370.38 257.57h11.16v11.16h-11.16zM392.70 257.57h11.16v11.16h-11.16zM415.02 257.57h11.16v11.16h-11.16zM437.35 257.57h11.16v11.16h-11.16zM459.67 257.57h11.16v11.16h-11.16zM314.56 268.74h11.16v11.16h-11.16zM336.89 268.74h11.16v11.16h-11.16zM359.21 268.74h11.16v11.16h-11.16zM381.54 268.74h11.16v11.16h-11.16zM403.86 268.74h11.16v11.16h-11.16zM426.19 268.74h11.16v11.16h-11.16zM448.51 268.74h11.16v11.16h-11.16zM470.84 268.74h11.16v11.16h-11.16z" fill="#555"/>
<g font-size="5.8" text-anchor="middle">
<text x="309.0" y="109.4" fill="#333">A</text>
<text x="320.1" y="109.4" fill="#606060">2</text>
<text x="331.3" y="109.4" fill="#333">A</text>
<text x="342.5" y="109.4" fill="#606060">4</text>
<text x="353.6" y="109.4" fill="#333">A</text>
<text x="364.8" y="109.4" fill="#606060">6</text>
<text x="376.0" y="109.4" fill="#333">A</text>
<text x="387.1" y="109.4" fill="#606060">8</text>
<text x="398.3" y="109.4" fill="#333">A</text>
<text x="409.4" y="109.4" fill="#606060" font-size="5">10</text>
<text x="420.6" y="109.4" fill="#333">A</text>
<text x="431.8" y="109.4" fill="#606060" font-size="5">12</text>
<text x="442.9" y="109.4" fill="#333">A</text>
<text x="454.1" y="109.4" fill="#606060" font-size="5">14</text>
<text x="465.3" y="109.4" fill="#333">A</text>
<text x="476.4" y="109.4" fill="#606060" font-size="5">16</text>
<text x="309.0" y="120.5" fill="#606060">1</text>
<text x="320.1" y="120.5" fill="#333">B</text>
<text x="331.3" y="120.5" fill="#606060">3</text>
<text x="342.5" y="120.5" fill="#333">B</text>
<text x="353.6" y="120.5" fill="#606060">5</text>
<text x="364.8" y="120.5" fill="#333">B</text>
<text x="376.0" y="120.5" fill="#606060">7</text>
<text x="387.1" y="120.5" fill="#333">B</text>
<text x="398.3" y="120.5" fill="#606060">9</text>
<text x="409.4" y="120.5" fill="#333">B</text>
<text x="420.6" y="120.5" fill="#606060" font-size="5">11</text>
<text x="431.8" y="120.5" fill="#333">B</text>
<text x="442.9" y="120.5" fill="#606060" font-size="5">13</text>
<text x="454.1" y="120.5" fill="#333">B</text>
<text x="465.3" y="120.5" fill="#606060" font-size="5">15</text>
<text x="476.4" y="120.5" fill="#333">B</text>
<text x="309.0" y="131.7" fill="#333">C</text>
<text x="320.1" y="131.7" fill="#606060">2</text>
<text x="331.3" y="131.7" fill="#333">C</text>
<text x="342.5" y="131.7" fill="#606060">4</text>
<text x="353.6" y="131.7" fill="#333">C</text>
<text x="364.8" y="131.7" fill="#606060">6</text>
<text x="376.0" y="131.7" fill="#333">C</text>
<text x="387.1" y="131.7" fill="#606060">8</text>
<text x="398.3" y="131.7" fill="#333">C</text>
<text x="409.4" y="131.7" fill="#606060" font-size="5">10</text>
<text x="420.6" y="131.7" fill="#333">C</text>
<text x="431.8" y="131.7" fill="#606060" font-size="5">12</text>
<text x="442.9" y="131.7" fill="#333">C</text>
<text x="454.1" y="131.7" fill="#606060" font-size="5">14</text>
<text x="465.3" y="131.7" fill="#333">C</text>
<text x="476.4" y="131.7" fill="#606060" font-size="5">16</text>
<text x="309.0" y="142.9" fill="#606060">1</text>
<text x="320.1" y="142.9" fill="#333">D</text>
<text x="331.3" y="142.9" fill="#606060">3</text>
<text x="342.5" y="142.9" fill="#333">D</text>
<text x="353.6" y="142.9" fill="#606060">5</text>
<text x="364.8" y="142.9" fill="#333">D</text>
<text x="376.0" y="142.9" fill="#606060">7</text>
<text x="387.1" y="142.9" fill="#333">D</text>
<text x="398.3" y="142.9" fill="#606060">9</text>
<text x="409.4" y="142.9" fill="#333">D</text>
<text x="420.6" y="142.9" fill="#606060" font-size="5">11</text>
<text x="431.8" y="142.9" fill="#333">D</text>
<text x="442.9" y="142.9" fill="#606060" font-size="5">13</text>
<text x="454.1" y="142.9" fill="#333">D</text>
<text x="465.3" y="142.9" fill="#606060" font-size="5">15</text>
<text x="476.4" y="142.9" fill="#333">D</text>
<text x="309.0" y="154.0" fill="#333">E</text>
<text x="320.1" y="154.0" fill="#606060">2</text>
<text x="331.3" y="154.0" fill="#333">E</text>
<text x="342.5" y="154.0" fill="#606060">4</text>
<text x="353.6" y="154.0" fill="#333">E</text>
<text x="364.8" y="154.0" fill="#606060">6</text>
<text x="376.0" y="154.0" fill="#333">E</text>
<text x="387.1" y="154.0" fill="#606060">8</text>
<text x="398.3" y="154.0" fill="#333">E</text>
<text x="409.4" y="154.0" fill="#606060" font-size="5">10</text>
<text x="420.6" y="154.0" fill="#333">E</text>
<text x="431.8" y="154.0" fill="#606060" font-size="5">12</text>
<text x="442.9" y="154.0" fill="#333">E</text>
<text x="454.1" y="154.0" fill="#606060" font-size="5">14</text>
<text x="465.3" y="154.0" fill="#333">E</text>
<text x="476.4" y="154.0" fill="#606060" font-size="5">16</text>
<text x="309.0" y="165.2" fill="#606060">1</text>
<text x="320.1" y="165.2" fill="#333">F</text>
<text x="331.3" y="165.2" fill="#606060">3</text>
<text x="342.5" y="165.2" fill="#333">F</text>
<text x="353.6" y="165.2" fill="#606060">5</text>
<text x="364.8" y="165.2" fill="#333">F</text>
<text x="376.0" y="165.2" fill="#606060">7</text>
<text x="387.1" y="165.2" fill="#333">F</text>
<text x="398.3" y="165.2" fill="#606060">9</text>
<text x="409.4" y="165.2" fill="#333">F</text>
<text x="420.6" y="165.2" fill="#606060" font-size="5">11</text>
<text x="431.8" y="165.2" fill="#333">F</text>
<text x="442.9" y="165.2" fill="#606060" font-size="5">13</text>
<text x="454.1" y="165.2" fill="#333">F</text>
<text x="465.3" y="165.2" fill="#606060" font-size="5">15</text>
<text x="476.4" y="165.2" fill="#333">F</text>
<text x="309.0" y="176.4" fill="#333">G</text>
<text x="320.1" y="176.4" fill="#606060">2</text>
<text x="331.3" y="176.4" fill="#333">G</text>
<text x="342.5" y="176.4" fill="#606060">4</text>
<text x="353.6" y="176.4" fill="#333">G</text>
<text x="364.8" y="176.4" fill="#606060">6</text>
<text x="376.0" y="176.4" fill="#333">G</text>
<text x="387.1" y="176.4" fill="#606060">8</text>
<text x="398.3" y="176.4" fill="#333">G</text>
<text x="409.4" y="176.4" fill="#606060" font-size="5">10</text>
<text x="420.6" y="176.4" fill="#333">G</text>
<text x="431.8" y="176.4" fill="#606060" font-size="5">12</text>
<text x="442.9" y="176.4" fill="#333">G</text>
<text x="454.1" y="176.4" fill="#606060" font-size="5">14</text>
<text x="465.3" y="176.4" fill="#333">G</text>
<text x="476.4" y="176.4" fill="#606060" font-size="5">16</text>
<text x="309.0" y="187.5" fill="#606060">1</text>
<text x="320.1" y="187.5" fill="#333">H</text>
<text x="331.3" y="187.5" fill="#606060">3</text>
<text x="342.5" y="187.5" fill="#333">H</text>
<text x="353.6" y="187.5" fill="#606060">5</text>
<text x="364.8" y="187.5" fill="#333">H</text>
<text x="376.0" y="187.5" fill="#606060">7</text>
<text x="387.1" y="187.5" fill="#333">H</text>
<text x="398.3" y="187.5" fill="#606060">9</text>
<text x="409.4" y="187.5" fill="#333">H</text>
<text x="420.6" y="187.5" fill="#606060" font-size="5">11</text>
<text x="431.8" y="187.5" fill="#333">H</text>
<text x="442.9" y="187.5" fill="#606060" font-size="5">13</text>
<text x="454.1" y="187.5" fill="#333">H</text>
<text x="465.3" y="187.5" fill="#606060" font-size="5">15</text>
<text x="476.4" y="187.5" fill="#333">H</text>
<text x="309.0" y="198.7" fill="#333">I</text>
<text x="320.1" y="198.7" fill="#606060">2</text>
<text x="331.3" y="198.7" fill="#333">I</text>
<text x="342.5" y="198.7" fill="#606060">4</text>
<text x="353.6" y="198.7" fill="#333">I</text>
<text x="364.8" y="198.7" fill="#606060">6</text>
<text x="376.0" y="198.7" fill="#333">I</text>
<text x="387.1" y="198.7" fill="#606060">8</text>
<text x="398.3" y="198.7" fill="#333">I</text>
<text x="409.4" y="198.7" fill="#606060" font-size="5">10</text>
<text x="420.6" y="198.7" fill="#333">I</text>
<text x="431.8" y="198.7" fill="#606060" font-size="5">12</text>
<text x="442.9" y="198.7" fill="#333">I</text>
<text x="454.1" y="198.7" fill="#606060" font-size="5">14</text>
<text x="465.3" y="198.7" fill="#333">I</text>
<text x="476.4" y="198.7" fill="#606060" font-size="5">16</text>
<text x="309.0" y="209.8" fill="#606060">1</text>
<text x="320.1" y="209.8" fill="#333">J</text>
<text x="331.3" y="209.8" fill="#606060">3</text>
<text x="342.5" y="209.8" fill="#333">J</text>
<text x="353.6" y="209.8" fill="#606060">5</text>
<text x="364.8" y="209.8" fill="#333">J</text>
<text x="376.0" y="209.8" fill="#606060">7</text>
<text x="387.1" y="209.8" fill="#333">J</text>
<text x="398.3" y="209.8" fill="#606060">9</text>
<text x="409.4" y="209.8" fill="#333">J</text>
<text x="420.6" y="209.8" fill="#606060" font-size="5">11</text>
<text x="431.8" y="209.8" fill="#333">J</text>
<text x="442.9" y="209.8" fill="#606060" font-size="5">13</text>
<text x="454.1" y="209.8" fill="#333">J</text>
<text x="465.3" y="209.8" fill="#606060" font-size="5">15</text>
<text x="476.4" y="209.8" fill="#333">J</text>
<text x="309.0" y="221.0" fill="#333">K</text>
<text x="320.1" y="221.0" fill="#606060">2</text>
<text x="331.3" y="221.0" fill="#333">K</text>
<text x="342.5" y="221.0" fill="#606060">4</text>
<text x="353.6" y="221.0" fill="#333">K</text>
<text x="364.8" y="221.0" fill="#606060">6</text>
<text x="376.0" y="221.0" fill="#333">K</text>
<text x="387.1" y="221.0" fill="#606060">8</text>
<text x="398.3" y="221.0" fill="#333">K</text>
<text x="409.4" y="221.0" fill="#606060" font-size="5">10</text>
<text x="420.6" y="221.0" fill="#333">K</text>
<text x="431.8" y="221.0" fill="#606060" font-size="5">12</text>
<text x="442.9" y="221.0" fill="#333">K</text>
<text x="454.1" y="221.0" fill="#606060" font-size="5">14</text>
<text x="465.3" y="221.0" fill="#333">K</text>
<text x="476.4" y="221.0" fill="#606060" font-size="5">16</text>
<text x="309.0" y="232.2" fill="#606060">1</text>
<text x="320.1" y="232.2" fill="#333">L</text>
<text x="331.3" y="232.2" fill="#606060">3</text>
<text x="342.5" y="232.2" fill="#333">L</text>
<text x="353.6" y="232.2" fill="#606060">5</text>
<text x="364.8" y="232.2" fill="#333">L</text>
<text x="376.0" y="232.2" fill="#606060">7</text>
<text x="387.1" y="232.2" fill="#333">L</text>
<text x="398.3" y="232.2" fill="#606060">9</text>
<text x="409.4" y="232.2" fill="#333">L</text>
<text x="420.6" y="232.2" fill="#606060" font-size="5">11</text>
<text x="431.8" y="232.2" fill="#333">L</text>
<text x="442.9" y="232.2" fill="#606060" font-size="5">13</text>
<text x="454.1" y="232.2" fill="#333">L</text>
<text x="465.3" y="232.2" fill="#606060" font-size="5">15</text>
<text x="476.4" y="232.2" fill="#333">L</text>
<text x="309.0" y="243.3" fill="#333">M</text>
<text x="320.1" y="243.3" fill="#606060">2</text>
<text x="331.3" y="243.3" fill="#333">M</text>
<text x="342.5" y="243.3" fill="#606060">4</text>
<text x="353.6" y="243.3" fill="#333">M</text>
<text x="364.8" y="243.3" fill="#606060">6</text>
<text x="376.0" y="243.3" fill="#333">M</text>
<text x="387.1" y="243.3" fill="#606060">8</text>
<text x="398.3" y="243.3" fill="#333">M</text>
<text x="409.4" y="243.3" fill="#606060" font-size="5">10</text>
<text x="420.6" y="243.3" fill="#333">M</text>
<text x="431.8" y="243.3" fill="#606060" font-size="5">12</text>
<text x="442.9" y="243.3" fill="#333">M</text>
<text x="454.1" y="243.3" fill="#606060" font-size="5">14</text>
<text x="465.3" y="243.3" fill="#333">M</text>
<text x="476.4" y="243.3" fill="#606060" font-size="5">16</text>
<text x="309.0" y="254.5" fill="#606060">1</text>
<text x="320.1" y="254.5" fill="#333">N</text>
<text x="331.3" y="254.5" fill="#606060">3</text>
<text x="342.5" y="254.5" fill="#333">N</text>
<text x="353.6" y="254.5" fill="#606060">5</text>
<text x="364.8" y="254.5" fill="#333">N</text>
<text x="376.0" y="254.5" fill="#606060">7</text>
<text x="387.1" y="254.5" fill="#333">N</text>
<text x="398.3" y="254.5" fill="#606060">9</text>
<text x="409.4" y="254.5" fill="#333">N</text>
<text x="420.6" y="254.5" fill="#606060" font-size="5">11</text>
<text x="431.8" y="254.5" fill="#333">N</text>
<text x="442.9" y="254.5" fill="#606060" font-size="5">13</text>
<text x="454.1" y="254.5" fill="#333">N</text>
<text x="465.3" y="254.5" fill="#606060" font-size="5">15</text>
<text x="476.4" y="254.5" fill="#333">N</text>
<text x="309.0" y="265.7" fill="#333">O</text>
<text x="320.1" y="265.7" fill="#606060">2</text>
<text x="331.3" y="265.7" fill="#333">O</text>
<text x="342.5" y="265.7" fill="#606060">4</text>
<text x="353.6" y="265.7" fill="#333">O</text>
<text x="364.8" y="265.7" fill="#606060">6</text>
<text x="376.0" y="265.7" fill="#333">O</text>
<text x="387.1" y="265.7" fill="#606060">8</text>
<text x="398.3" y="265.7" fill="#333">O</text>
<text x="409.4" y="265.7" fill="#606060" font-size="5">10</text>
<text x="420.6" y="265.7" fill="#333">O</text>
<text x="431.8" y="265.7" fill="#606060" font-size="5">12</text>
<text x="442.9" y="265.7" fill="#333">O</text>
<text x="454.1" y="265.7" fill="#606060" font-size="5">14</text>
<text x="465.3" y="265.7" fill="#333">O</text>
<text x="476.4" y="265.7" fill="#606060" font-size="5">16</text>
<text x="309.0" y="276.8" fill="#606060">1</text>
<text x="320.1" y="276.8" fill="#333">P</text>
<text x="331.3" y="276.8" fill="#606060">3</text>
<text x="342.5" y="276.8" fill="#333">P</text>
<text x="353.6" y="276.8" fill="#606060">5</text>
<text x="364.8" y="276.8" fill="#333">P</text>
<text x="376.0" y="276.8" fill="#606060">7</text>
<text x="387.1" y="276.8" fill="#333">P</text>
<text x="398.3" y="276.8" fill="#606060">9</text>
<text x="409.4" y="276.8" fill="#333">P</text>
<text x="420.6" y="276.8" fill="#606060" font-size="5">11</text>
<text x="431.8" y="276.8" fill="#333">P</text>
<text x="442.9" y="276.8" fill="#606060" font-size="5">13</text>
<text x="454.1" y="276.8" fill="#333">P</text>
<text x="465.3" y="276.8" fill="#606060" font-size="5">15</text>
<text x="476.4" y="276.8" fill="#333">P</text>
</g>
<rect x="418.85" y="119.4" width="63.1" height=".8" fill="#777" opacity=".35"/>
<rect x="418.85" y="140.8" width="63.1" height=".8" fill="#777" opacity=".35"/>
<rect x="418.85" y="153.9" width="63.1" height=".8" fill="#777" opacity=".35"/>
<rect x="418.85" y="162.1" width="63.1" height=".8" fill="#777" opacity=".35"/>
<rect x="418.85" y="171.9" width="63.1" height=".8" fill="#777" opacity=".35"/>
<rect x="418.85" y="189.6" width="63.1" height=".8" fill="#777" opacity=".35"/>
<rect x="418.85" y="240.6" width="63.1" height=".8" fill="#777" opacity=".35"/>
<rect x="418.85" y="261.1" width="63.1" height=".8" fill="#777" opacity=".35"/>
<rect x="303.4" y="101.3" width="115.45000000000005" height="2.3" fill="#000" opacity=".15"/>
</g>
<g clip-path="url(#lt)">
<rect x="303.4" y="101.3" width="115.45000000000005" height="178.6" fill="#898989"/>
<path d="M303.40 101.30h11.16v11.16h-11.16zM325.72 101.30h11.16v11.16h-11.16zM348.05 101.30h11.16v11.16h-11.16zM370.38 101.30h11.16v11.16h-11.16zM392.70 101.30h11.16v11.16h-11.16zM415.02 101.30h11.16v11.16h-11.16zM437.35 101.30h11.16v11.16h-11.16zM459.67 101.30h11.16v11.16h-11.16zM314.56 112.46h11.16v11.16h-11.16zM336.89 112.46h11.16v11.16h-11.16zM359.21 112.46h11.16v11.16h-11.16zM381.54 112.46h11.16v11.16h-11.16zM403.86 112.46h11.16v11.16h-11.16zM426.19 112.46h11.16v11.16h-11.16zM448.51 112.46h11.16v11.16h-11.16zM470.84 112.46h11.16v11.16h-11.16zM303.40 123.62h11.16v11.16h-11.16zM325.72 123.62h11.16v11.16h-11.16zM348.05 123.62h11.16v11.16h-11.16zM370.38 123.62h11.16v11.16h-11.16zM392.70 123.62h11.16v11.16h-11.16zM415.02 123.62h11.16v11.16h-11.16zM437.35 123.62h11.16v11.16h-11.16zM459.67 123.62h11.16v11.16h-11.16zM314.56 134.79h11.16v11.16h-11.16zM336.89 134.79h11.16v11.16h-11.16zM359.21 134.79h11.16v11.16h-11.16zM381.54 134.79h11.16v11.16h-11.16zM403.86 134.79h11.16v11.16h-11.16zM426.19 134.79h11.16v11.16h-11.16zM448.51 134.79h11.16v11.16h-11.16zM470.84 134.79h11.16v11.16h-11.16zM303.40 145.95h11.16v11.16h-11.16zM325.72 145.95h11.16v11.16h-11.16zM348.05 145.95h11.16v11.16h-11.16zM370.38 145.95h11.16v11.16h-11.16zM392.70 145.95h11.16v11.16h-11.16zM415.02 145.95h11.16v11.16h-11.16zM437.35 145.95h11.16v11.16h-11.16zM459.67 145.95h11.16v11.16h-11.16zM314.56 157.11h11.16v11.16h-11.16zM336.89 157.11h11.16v11.16h-11.16zM359.21 157.11h11.16v11.16h-11.16zM381.54 157.11h11.16v11.16h-11.16zM403.86 157.11h11.16v11.16h-11.16zM426.19 157.11h11.16v11.16h-11.16zM448.51 157.11h11.16v11.16h-11.16zM470.84 157.11h11.16v11.16h-11.16zM303.40 168.27h11.16v11.16h-11.16zM325.72 168.27h11.16v11.16h-11.16zM348.05 168.27h11.16v11.16h-11.16zM370.38 168.27h11.16v11.16h-11.16zM392.70 168.27h11.16v11.16h-11.16zM415.02 168.27h11.16v11.16h-11.16zM437.35 168.27h11.16v11.16h-11.16zM459.67 168.27h11.16v11.16h-11.16zM314.56 179.44h11.16v11.16h-11.16zM336.89 179.44h11.16v11.16h-11.16zM359.21 179.44h11.16v11.16h-11.16zM381.54 179.44h11.16v11.16h-11.16zM403.86 179.44h11.16v11.16h-11.16zM426.19 179.44h11.16v11.16h-11.16zM448.51 179.44h11.16v11.16h-11.16zM470.84 179.44h11.16v11.16h-11.16zM303.40 190.60h11.16v11.16h-11.16zM325.72 190.60h11.16v11.16h-11.16zM348.05 190.60h11.16v11.16h-11.16zM370.38 190.60h11.16v11.16h-11.16zM392.70 190.60h11.16v11.16h-11.16zM415.02 190.60h11.16v11.16h-11.16zM437.35 190.60h11.16v11.16h-11.16zM459.67 190.60h11.16v11.16h-11.16zM314.56 201.76h11.16v11.16h-11.16zM336.89 201.76h11.16v11.16h-11.16zM359.21 201.76h11.16v11.16h-11.16zM381.54 201.76h11.16v11.16h-11.16zM403.86 201.76h11.16v11.16h-11.16zM426.19 201.76h11.16v11.16h-11.16zM448.51 201.76h11.16v11.16h-11.16zM470.84 201.76h11.16v11.16h-11.16zM303.40 212.93h11.16v11.16h-11.16zM325.72 212.93h11.16v11.16h-11.16zM348.05 212.93h11.16v11.16h-11.16zM370.38 212.93h11.16v11.16h-11.16zM392.70 212.93h11.16v11.16h-11.16zM415.02 212.93h11.16v11.16h-11.16zM437.35 212.93h11.16v11.16h-11.16zM459.67 212.93h11.16v11.16h-11.16zM314.56 224.09h11.16v11.16h-11.16zM336.89 224.09h11.16v11.16h-11.16zM359.21 224.09h11.16v11.16h-11.16zM381.54 224.09h11.16v11.16h-11.16zM403.86 224.09h11.16v11.16h-11.16zM426.19 224.09h11.16v11.16h-11.16zM448.51 224.09h11.16v11.16h-11.16zM470.84 224.09h11.16v11.16h-11.16zM303.40 235.25h11.16v11.16h-11.16zM325.72 235.25h11.16v11.16h-11.16zM348.05 235.25h11.16v11.16h-11.16zM370.38 235.25h11.16v11.16h-11.16zM392.70 235.25h11.16v11.16h-11.16zM415.02 235.25h11.16v11.16h-11.16zM437.35 235.25h11.16v11.16h-11.16zM459.67 235.25h11.16v11.16h-11.16zM314.56 246.41h11.16v11.16h-11.16zM336.89 246.41h11.16v11.16h-11.16zM359.21 246.41h11.16v11.16h-11.16zM381.54 246.41h11.16v11.16h-11.16zM403.86 246.41h11.16v11.16h-11.16zM426.19 246.41h11.16v11.16h-11.16zM448.51 246.41h11.16v11.16h-11.16zM470.84 246.41h11.16v11.16h-11.16zM303.40 257.57h11.16v11.16h-11.16zM325.72 257.57h11.16v11.16h-11.16zM348.05 257.57h11.16v11.16h-11.16zM370.38 257.57h11.16v11.16h-11.16zM392.70 257.57h11.16v11.16h-11.16zM415.02 257.57h11.16v11.16h-11.16zM437.35 257.57h11.16v11.16h-11.16zM459.67 257.57h11.16v11.16h-11.16zM314.56 268.74h11.16v11.16h-11.16zM336.89 268.74h11.16v11.16h-11.16zM359.21 268.74h11.16v11.16h-11.16zM381.54 268.74h11.16v11.16h-11.16zM403.86 268.74h11.16v11.16h-11.16zM426.19 268.74h11.16v11.16h-11.16zM448.51 268.74h11.16v11.16h-11.16zM470.84 268.74h11.16v11.16h-11.16z" fill="#a0a0a0"/>
<g font-size="5.8" text-anchor="middle">
<text x="309.0" y="109.4" fill="#8e8e8e">A</text>
<text x="320.1" y="109.4" fill="#9b9b9b">2</text>
<text x="331.3" y="109.4" fill="#8e8e8e">A</text>
<text x="342.5" y="109.4" fill="#9b9b9b">4</text>
<text x="353.6" y="109.4" fill="#8e8e8e">A</text>
<text x="364.8" y="109.4" fill="#9b9b9b">6</text>
<text x="376.0" y="109.4" fill="#8e8e8e">A</text>
<text x="387.1" y="109.4" fill="#9b9b9b">8</text>
<text x="398.3" y="109.4" fill="#8e8e8e">A</text>
<text x="409.4" y="109.4" fill="#9b9b9b" font-size="5">10</text>
<text x="420.6" y="109.4" fill="#8e8e8e">A</text>
<text x="309.0" y="120.5" fill="#9b9b9b">1</text>
<text x="320.1" y="120.5" fill="#8e8e8e">B</text>
<text x="331.3" y="120.5" fill="#9b9b9b">3</text>
<text x="342.5" y="120.5" fill="#8e8e8e">B</text>
<text x="353.6" y="120.5" fill="#9b9b9b">5</text>
<text x="364.8" y="120.5" fill="#8e8e8e">B</text>
<text x="376.0" y="120.5" fill="#9b9b9b">7</text>
<text x="387.1" y="120.5" fill="#8e8e8e">B</text>
<text x="398.3" y="120.5" fill="#9b9b9b">9</text>
<text x="409.4" y="120.5" fill="#8e8e8e">B</text>
<text x="420.6" y="120.5" fill="#9b9b9b" font-size="5">11</text>
<text x="309.0" y="131.7" fill="#8e8e8e">C</text>
<text x="320.1" y="131.7" fill="#9b9b9b">2</text>
<text x="331.3" y="131.7" fill="#8e8e8e">C</text>
<text x="342.5" y="131.7" fill="#9b9b9b">4</text>
<text x="353.6" y="131.7" fill="#8e8e8e">C</text>
<text x="364.8" y="131.7" fill="#9b9b9b">6</text>
<text x="376.0" y="131.7" fill="#8e8e8e">C</text>
<text x="387.1" y="131.7" fill="#9b9b9b">8</text>
<text x="398.3" y="131.7" fill="#8e8e8e">C</text>
<text x="409.4" y="131.7" fill="#9b9b9b" font-size="5">10</text>
<text x="420.6" y="131.7" fill="#8e8e8e">C</text>
<text x="309.0" y="142.9" fill="#9b9b9b">1</text>
<text x="320.1" y="142.9" fill="#8e8e8e">D</text>
<text x="331.3" y="142.9" fill="#9b9b9b">3</text>
<text x="342.5" y="142.9" fill="#8e8e8e">D</text>
<text x="353.6" y="142.9" fill="#9b9b9b">5</text>
<text x="364.8" y="142.9" fill="#8e8e8e">D</text>
<text x="376.0" y="142.9" fill="#9b9b9b">7</text>
<text x="387.1" y="142.9" fill="#8e8e8e">D</text>
<text x="398.3" y="142.9" fill="#9b9b9b">9</text>
<text x="409.4" y="142.9" fill="#8e8e8e">D</text>
<text x="420.6" y="142.9" fill="#9b9b9b" font-size="5">11</text>
<text x="309.0" y="154.0" fill="#8e8e8e">E</text>
<text x="320.1" y="154.0" fill="#9b9b9b">2</text>
<text x="331.3" y="154.0" fill="#8e8e8e">E</text>
<text x="342.5" y="154.0" fill="#9b9b9b">4</text>
<text x="353.6" y="154.0" fill="#8e8e8e">E</text>
<text x="364.8" y="154.0" fill="#9b9b9b">6</text>
<text x="376.0" y="154.0" fill="#8e8e8e">E</text>
<text x="387.1" y="154.0" fill="#9b9b9b">8</text>
<text x="398.3" y="154.0" fill="#8e8e8e">E</text>
<text x="409.4" y="154.0" fill="#9b9b9b" font-size="5">10</text>
<text x="420.6" y="154.0" fill="#8e8e8e">E</text>
<text x="309.0" y="165.2" fill="#9b9b9b">1</text>
<text x="320.1" y="165.2" fill="#8e8e8e">F</text>
<text x="331.3" y="165.2" fill="#9b9b9b">3</text>
<text x="342.5" y="165.2" fill="#8e8e8e">F</text>
<text x="353.6" y="165.2" fill="#9b9b9b">5</text>
<text x="364.8" y="165.2" fill="#8e8e8e">F</text>
<text x="376.0" y="165.2" fill="#9b9b9b">7</text>
<text x="387.1" y="165.2" fill="#8e8e8e">F</text>
<text x="398.3" y="165.2" fill="#9b9b9b">9</text>
<text x="409.4" y="165.2" fill="#8e8e8e">F</text>
<text x="420.6" y="165.2" fill="#9b9b9b" font-size="5">11</text>
<text x="309.0" y="176.4" fill="#8e8e8e">G</text>
<text x="320.1" y="176.4" fill="#9b9b9b">2</text>
<text x="331.3" y="176.4" fill="#8e8e8e">G</text>
<text x="342.5" y="176.4" fill="#9b9b9b">4</text>
<text x="353.6" y="176.4" fill="#8e8e8e">G</text>
<text x="364.8" y="176.4" fill="#9b9b9b">6</text>
<text x="376.0" y="176.4" fill="#8e8e8e">G</text>
<text x="387.1" y="176.4" fill="#9b9b9b">8</text>
<text x="398.3" y="176.4" fill="#8e8e8e">G</text>
<text x="409.4" y="176.4" fill="#9b9b9b" font-size="5">10</text>
<text x="420.6" y="176.4" fill="#8e8e8e">G</text>
<text x="309.0" y="187.5" fill="#9b9b9b">1</text>
<text x="320.1" y="187.5" fill="#8e8e8e">H</text>
<text x="331.3" y="187.5" fill="#9b9b9b">3</text>
<text x="342.5" y="187.5" fill="#8e8e8e">H</text>
<text x="353.6" y="187.5" fill="#9b9b9b">5</text>
<text x="364.8" y="187.5" fill="#8e8e8e">H</text>
<text x="376.0" y="187.5" fill="#9b9b9b">7</text>
<text x="387.1" y="187.5" fill="#8e8e8e">H</text>
<text x="398.3" y="187.5" fill="#9b9b9b">9</text>
<text x="409.4" y="187.5" fill="#8e8e8e">H</text>
<text x="420.6" y="187.5" fill="#9b9b9b" font-size="5">11</text>
<text x="309.0" y="198.7" fill="#8e8e8e">I</text>
<text x="320.1" y="198.7" fill="#9b9b9b">2</text>
<text x="331.3" y="198.7" fill="#8e8e8e">I</text>
<text x="342.5" y="198.7" fill="#9b9b9b">4</text>
<text x="353.6" y="198.7" fill="#8e8e8e">I</text>
<text x="364.8" y="198.7" fill="#9b9b9b">6</text>
<text x="376.0" y="198.7" fill="#8e8e8e">I</text>
<text x="387.1" y="198.7" fill="#9b9b9b">8</text>
<text x="398.3" y="198.7" fill="#8e8e8e">I</text>
<text x="409.4" y="198.7" fill="#9b9b9b" font-size="5">10</text>
<text x="420.6" y="198.7" fill="#8e8e8e">I</text>
<text x="309.0" y="209.8" fill="#9b9b9b">1</text>
<text x="320.1" y="209.8" fill="#8e8e8e">J</text>
<text x="331.3" y="209.8" fill="#9b9b9b">3</text>
<text x="342.5" y="209.8" fill="#8e8e8e">J</text>
<text x="353.6" y="209.8" fill="#9b9b9b">5</text>
<text x="364.8" y="209.8" fill="#8e8e8e">J</text>
<text x="376.0" y="209.8" fill="#9b9b9b">7</text>
<text x="387.1" y="209.8" fill="#8e8e8e">J</text>
<text x="398.3" y="209.8" fill="#9b9b9b">9</text>
<text x="409.4" y="209.8" fill="#8e8e8e">J</text>
<text x="420.6" y="209.8" fill="#9b9b9b" font-size="5">11</text>
<text x="309.0" y="221.0" fill="#8e8e8e">K</text>
<text x="320.1" y="221.0" fill="#9b9b9b">2</text>
<text x="331.3" y="221.0" fill="#8e8e8e">K</text>
<text x="342.5" y="221.0" fill="#9b9b9b">4</text>
<text x="353.6" y="221.0" fill="#8e8e8e">K</text>
<text x="364.8" y="221.0" fill="#9b9b9b">6</text>
<text x="376.0" y="221.0" fill="#8e8e8e">K</text>
<text x="387.1" y="221.0" fill="#9b9b9b">8</text>
<text x="398.3" y="221.0" fill="#8e8e8e">K</text>
<text x="409.4" y="221.0" fill="#9b9b9b" font-size="5">10</text>
<text x="420.6" y="221.0" fill="#8e8e8e">K</text>
<text x="309.0" y="232.2" fill="#9b9b9b">1</text>
<text x="320.1" y="232.2" fill="#8e8e8e">L</text>
<text x="331.3" y="232.2" fill="#9b9b9b">3</text>
<text x="342.5" y="232.2" fill="#8e8e8e">L</text>
<text x="353.6" y="232.2" fill="#9b9b9b">5</text>
<text x="364.8" y="232.2" fill="#8e8e8e">L</text>
<text x="376.0" y="232.2" fill="#9b9b9b">7</text>
<text x="387.1" y="232.2" fill="#8e8e8e">L</text>
<text x="398.3" y="232.2" fill="#9b9b9b">9</text>
<text x="409.4" y="232.2" fill="#8e8e8e">L</text>
<text x="420.6" y="232.2" fill="#9b9b9b" font-size="5">11</text>
<text x="309.0" y="243.3" fill="#8e8e8e">M</text>
<text x="320.1" y="243.3" fill="#9b9b9b">2</text>
<text x="331.3" y="243.3" fill="#8e8e8e">M</text>
<text x="342.5" y="243.3" fill="#9b9b9b">4</text>
<text x="353.6" y="243.3" fill="#8e8e8e">M</text>
<text x="364.8" y="243.3" fill="#9b9b9b">6</text>
<text x="376.0" y="243.3" fill="#8e8e8e">M</text>
<text x="387.1" y="243.3" fill="#9b9b9b">8</text>
<text x="398.3" y="243.3" fill="#8e8e8e">M</text>
<text x="409.4" y="243.3" fill="#9b9b9b" font-size="5">10</text>
<text x="420.6" y="243.3" fill="#8e8e8e">M</text>
<text x="309.0" y="254.5" fill="#9b9b9b">1</text>
<text x="320.1" y="254.5" fill="#8e8e8e">N</text>
<text x="331.3" y="254.5" fill="#9b9b9b">3</text>
<text x="342.5" y="254.5" fill="#8e8e8e">N</text>
<text x="353.6" y="254.5" fill="#9b9b9b">5</text>
<text x="364.8" y="254.5" fill="#8e8e8e">N</text>
<text x="376.0" y="254.5" fill="#9b9b9b">7</text>
<text x="387.1" y="254.5" fill="#8e8e8e">N</text>
<text x="398.3" y="254.5" fill="#9b9b9b">9</text>
<text x="409.4" y="254.5" fill="#8e8e8e">N</text>
<text x="420.6" y="254.5" fill="#9b9b9b" font-size="5">11</text>
<text x="309.0" y="265.7" fill="#8e8e8e">O</text>
<text x="320.1" y="265.7" fill="#9b9b9b">2</text>
<text x="331.3" y="265.7" fill="#8e8e8e">O</text>
<text x="342.5" y="265.7" fill="#9b9b9b">4</text>
<text x="353.6" y="265.7" fill="#8e8e8e">O</text>
<text x="364.8" y="265.7" fill="#9b9b9b">6</text>
<text x="376.0" y="265.7" fill="#8e8e8e">O</text>
<text x="387.1" y="265.7" fill="#9b9b9b">8</text>
<text x="398.3" y="265.7" fill="#8e8e8e">O</text>
<text x="409.4" y="265.7" fill="#9b9b9b" font-size="5">10</text>
<text x="420.6" y="265.7" fill="#8e8e8e">O</text>
<text x="309.0" y="276.8" fill="#9b9b9b">1</text>
<text x="320.1" y="276.8" fill="#8e8e8e">P</text>
<text x="331.3" y="276.8" fill="#9b9b9b">3</text>
<text x="342.5" y="276.8" fill="#8e8e8e">P</text>
<text x="353.6" y="276.8" fill="#9b9b9b">5</text>
<text x="364.8" y="276.8" fill="#8e8e8e">P</text>
<text x="376.0" y="276.8" fill="#9b9b9b">7</text>
<text x="387.1" y="276.8" fill="#8e8e8e">P</text>
<text x="398.3" y="276.8" fill="#9b9b9b">9</text>
<text x="409.4" y="276.8" fill="#8e8e8e">P</text>
<text x="420.6" y="276.8" fill="#9b9b9b" font-size="5">11</text>
</g>
<rect x="303.4" y="119.40" width="115.45" height="0.8" fill="#555" opacity="0.5"/>
<rect x="303.4" y="140.80" width="115.45" height="0.8" fill="#555" opacity="0.5"/>
<rect x="303.4" y="153.85" width="115.45" height="0.9" fill="#444" opacity="0.7"/>
<rect x="303.4" y="161.25" width="115.45" height="2.5" fill="#222" opacity="0.9"/>
<rect x="303.4" y="168.45" width="115.45" height="0.7" fill="#666" opacity="0.4"/>
<rect x="303.4" y="171.90" width="115.45" height="0.8" fill="#444" opacity="0.6"/>
<rect x="303.4" y="182.15" width="115.45" height="1.7" fill="#fff" opacity="0.88"/>
<rect x="303.4" y="189.60" width="115.45" height="0.8" fill="#444" opacity="0.65"/>
<rect x="303.4" y="220.55" width="115.45" height="2.5" fill="#222" opacity="0.9"/>
<rect x="303.4" y="240.55" width="115.45" height="0.9" fill="#555" opacity="0.55"/>
<rect x="303.4" y="259.55" width="115.45" height="0.9" fill="#fff" opacity="0.5"/>
<rect x="303.4" y="261.55" width="115.45" height="0.9" fill="#444" opacity="0.7"/>
<rect x="321.10" y="101.3" width="0.8" height="178.6" fill="#444" opacity="0.75"/>
<rect x="322.30" y="101.3" width="0.8" height="178.6" fill="#fff" opacity="0.45"/>
<rect x="337.20" y="101.3" width="0.8" height="178.6" fill="#444" opacity="0.7"/>
<rect x="339.85" y="101.3" width="1.1" height="178.6" fill="#fff" opacity="0.8"/>
<rect x="357.90" y="101.3" width="0.8" height="178.6" fill="#444" opacity="0.7"/>
<rect x="359.85" y="101.3" width="2.3" height="178.6" fill="#2e2e2e" opacity="0.95"/>
<rect x="373.95" y="101.3" width="0.9" height="178.6" fill="#444" opacity="0.75"/>
<rect x="381.90" y="101.3" width="0.8" height="178.6" fill="#fff" opacity="0.35"/>
<rect x="392.20" y="101.3" width="0.8" height="178.6" fill="#555" opacity="0.5"/>
<rect x="399.95" y="101.3" width="0.9" height="178.6" fill="#fff" opacity="0.62"/>
<rect x="410.25" y="101.3" width="0.9" height="178.6" fill="#444" opacity="0.75"/>
</g>
<path d="M303.4 216 V279.9 H366.4" fill="none" stroke="#d8403c" stroke-width="1"/>
<text x="304.6" y="217.2" font-size="3.6" fill="#e03030">v</text><text x="366.4" y="279.6" font-size="3.6" fill="#e03030">u</text>
<path d="M31.2 428.4 A14.8 14.8 0 0 0 31.2 455.3 Z" fill="#869194" opacity=".8"/>
<rect x="31.2" y="433.4" width="14.9" height="16.4" fill="#b4bdbf"/><rect x="31.2" y="449.8" width="14.9" height="5.5" fill="#a8b1b3"/>
<rect x="46.1" y="433.4" width="14.9" height="16.4" fill="#c0b7ba"/>
<rect x="61" y="426.7" width="15" height="23.1" fill="#c3bbbe"/><rect x="61" y="426.7" width="15" height="6.7" fill="#b8bec0"/>
<rect x="76" y="433.4" width="15" height="16.4" fill="#bfb2b6"/>
<path d="M91 433.4 H101 Q105.8 433.4 105.8 438 V445.4 Q105.8 449.8 101 449.8 H91Z" fill="#c1b6b9"/>
<rect x="105.5" y="440.7" width="29.6" height="9" fill="#8a9ba6" stroke="#f4f6f6" stroke-width=".7"/><rect x="124.35" y="441" width="1.3" height="8.4" fill="#5a636a"/>
<rect x="105.9" y="444.25" width="27.4" height="1.9" fill="#cc1f26"/><circle cx="134.6" cy="445.3" r="1.35" fill="#fff"/>
<text x="136.9" y="448.3" font-size="5" letter-spacing=".5" fill="#ffffff" stroke="#5a6468" stroke-width=".35" paint-order="stroke">Spacing</text>
<path d="M30.4 455.6 V465 H38" fill="none" stroke="#e03838" stroke-width=".8"/><text x="39.2" y="464.8" font-size="4" fill="#e03838">u</text>
<rect x="499.2" y="88.4" width="48" height="7.2" fill="none" stroke="#e6e600" stroke-width=".8"/>
<text x="500.9" y="94" font-size="5.95" fill="#e8e800">uv1 (UV vertex)</text><path d="M543.6 91.2h3l-1.5 2z" fill="#e8e800"/>
<rect x="550.2" y="88.4" width="26.8" height="7.2" fill="none" stroke="#e6e600" stroke-width=".8"/>
<text x="551.8" y="94" font-size="5.9" fill="#e8e800">no cam</text><path d="M572 91.2h3l-1.5 2z" fill="#e8e800"/>
</g></svg>
<div class="a" style="left:2px;top:85px;width:17.4px;height:390px;background:#3a3a3a"></div>
<div class="a" style="left:587.2px;top:85px;width:15.8px;height:390px;background:#3a3a3a"></div>
<div class="a" style="left:600px;top:84.8px;width:1.1px;height:390px;background:#1c1c1c"></div><div class="a" style="left:601.1px;top:84.8px;width:2px;height:390px;background:#484848"></div>
<svg class="a" style="left:0;top:0" width="603" height="478" viewBox="0 0 603 478">
<rect x="3" y="85.2" width="16.2" height="3.8" fill="#4c4c4c"/><path d="M6.4 85.8 L4 87.1 L6.4 88.4Z" fill="#000"/>
<rect x="4.6" y="92.4" width="12.6" height="36" rx="1" fill="#2a2a2a"/>
<rect x="5" y="92.8" width="11.8" height="11.4" fill="#464646"/>
<rect x="5" y="104.6" width="11.8" height="12.2" fill="#c48a1c"/>
<rect x="5" y="117.2" width="11.8" height="10.8" fill="#464646"/>
<circle cx="12.4" cy="97.2" r="2.3" fill="#8a8e90"/><path d="M7.4 102 L10 96.4 L12.8 102 Q10 103.2 7.4 102Z" fill="#f0dc3c"/><path d="M15 101.4 L16.4 102.6 L15 103.6Z" fill="#ccc"/>
<path d="M7 109.6 L11 106 L15 109.6 L11 113.4Z" fill="#8f9294"/><path d="M9.2 111.8 L11.2 109.8 L13.2 111.8 L11.2 114Z" fill="#f4e040"/><path d="M14.6 112.8 L16.2 114.4 L14.6 116Z" fill="#111"/>
<path d="M8 121.6 L11.6 119.6 L14.6 122.4 L12.8 126 L9 125.4Z" fill="#e8d020"/><path d="M9 120.4 L11.6 119.6 L14.6 122.4 L13.4 123" fill="none" stroke="#fff8a0" stroke-width=".5"/><path d="M15 125.4 L16.4 126.4 L15 127.4Z" fill="#ccc"/>
<path d="M8.3 137 L8.3 145.4 L10.3 143.6 L11.8 146.6 L13 146 L11.6 143.2 L13.6 142.8Z" fill="#e8e8e8"/><path d="M15 145.2 L16.4 146.2 L15 147.2Z" fill="#999"/>
<path d="M11 154.6 L7.6 156.4 M11 154.6 L14.6 155.4 M11 154.6 V158.4" stroke="#c82020" stroke-width=".8"/><circle cx="7.6" cy="156.4" r="1" fill="#e02020"/><circle cx="14.6" cy="155.4" r="1" fill="#e02020"/><circle cx="11" cy="158.6" r="1" fill="#e02020"/><circle cx="11" cy="154.4" r="1.9" fill="#b0b6ba"/>
<path d="M7.4 169.8 A4 3 0 0 0 14.8 170.6" stroke="#e03818" stroke-width="1.5" fill="none"/><path d="M7 170.6 L8 173 L9.6 171.2Z" fill="#f07020"/><path d="M12 173 L14.6 172.8 L13.4 170.8Z" fill="#f07020"/><circle cx="11" cy="168.4" r="2.1" fill="#b0b6ba"/>
<path d="M11 181 V185 M11 185 L8 187.6 M11 185 L14 187.6" stroke="#c82020" stroke-width=".8"/><circle cx="11" cy="180.6" r="1" fill="#e02020"/><circle cx="8" cy="187.8" r="1" fill="#e02020"/><circle cx="14" cy="187.8" r="1" fill="#e02020"/><rect x="9.6" y="182.8" width="2.8" height="3.6" fill="#a0a6aa"/>
<rect x="4.4" y="191.6" width="12.6" height="13" fill="#c48a1c"/>
<path d="M10 199 L9.6 193.4" stroke="#48c028" stroke-width="1.3"/><path d="M8.6 194.6 L9.5 192.6 L10.8 194.4Z" fill="#48c028"/><path d="M10 199 L14.6 197.2" stroke="#e02828" stroke-width="1.2"/><path d="M10 199 L7 202" stroke="#3878e0" stroke-width="1.2"/><circle cx="10" cy="199" r="1" fill="#f0e040"/><path d="M14.8 201.8 L16.4 203.2 L14.8 204.6Z" fill="#111"/>
<path d="M7.1 217.95000000000002 V214.8 A2.1 2.1 0 0 1 11.299999999999999 214.8 V217.95000000000002" fill="none" stroke="#d42a34" stroke-width="1.5"/><path d="M7.1 217.95000000000002 v-0.9 M11.299999999999999 217.95000000000002 v-0.9" stroke="#eee" stroke-width="1.5"/>
<path d="M12.6 216 H15.6 V219 M12 219.6 H15.8" stroke="#ddd" stroke-width=".6" fill="none"/><path d="M15.6 220.4 l1 .8 l-1 .8z" fill="#999"/>
<path d="M7.1 232.35 V229.2 A2.1 2.1 0 0 1 11.299999999999999 229.2 V232.35" fill="none" stroke="#d42a34" stroke-width="1.5"/><path d="M7.1 232.35 v-0.9 M11.299999999999999 232.35 v-0.9" stroke="#eee" stroke-width="1.5"/>
<path d="M10 233 L12.8 230.4 L14 232 L15.8 229.6" stroke="#ddd" stroke-width=".6" fill="none"/><path d="M15.6 234.4 l1 .8 l-1 .8z" fill="#999"/>
<path d="M7.1 246.55 V243.4 A2.1 2.1 0 0 1 11.299999999999999 243.4 V246.55" fill="none" stroke="#d42a34" stroke-width="1.5"/><path d="M7.1 246.55 v-0.9 M11.299999999999999 246.55 v-0.9" stroke="#eee" stroke-width="1.5"/>
<circle cx="13.6" cy="246.4" r="1.1" fill="#aaa"/><path d="M15.6 247.4 l1 .8 l-1 .8z" fill="#999"/>
<path d="M7.65 262.32500000000005 V257.6 A3.1500000000000004 3.1500000000000004 0 0 1 13.950000000000001 257.6 V262.32500000000005" fill="none" stroke="#d42a34" stroke-width="2.2"/><path d="M7.65 262.32500000000005 v-1.35 M13.950000000000001 262.32500000000005 v-1.35" stroke="#eee" stroke-width="2.2"/>
<path d="M15.6 262 l1 .8 l-1 .8z" fill="#999"/>
<rect x="4" y="267.8" width="13.6" height=".6" fill="#2c2c2c"/>
<path d="M7 277 L11 272.8 L15.6 276.4 L12 281 Z" fill="#2a2f35"/><circle cx="11.2" cy="276.8" r="1.6" fill="#222830"/>
<circle cx="10" cy="290.4" r="3.5" fill="none" stroke="#e0e0e0" stroke-width=".9"/><rect x="10.6" y="291" width="4.2" height="4.6" fill="#e8e8e8" stroke="#d02828" stroke-width=".8"/><path d="M11.4 294.8 L14 291.8" stroke="#d02828" stroke-width=".6"/>
<path d="M6.8 305.4 A4.6 4.2 0 0 0 15.8 305.4Z" fill="#e4e8ea"/><ellipse cx="11.3" cy="305.4" rx="4.5" ry="1.5" fill="#4a5258"/><path d="M10.6 301 L11.8 304.8" stroke="#111" stroke-width=".8"/><path d="M15.6 309.4 l1 .8 l-1 .8z" fill="#999"/>
<path d="M6.2 453 L10.6 451 L13.2 454.6 L9.4 457.4Z" fill="#e8e8e8"/><path d="M9.4 457.4 L13.2 454.6 L13.4 455.8 L9.8 458.2Z" fill="#a86a3a"/><path d="M10.6 451 L12.4 450.6" stroke="#ccc" stroke-width=".6"/><path d="M13.6 457.4 l1.4 1 l-1.4 1z" fill="#aaa"/>
<ellipse cx="10.2" cy="466.6" rx="4.2" ry="3.4" fill="#9a9a9a" stroke="#d8d8d8" stroke-width=".6"/><path d="M7 466 L13.4 467.2 M9 463.8 L11.4 469.6 M7.6 468.4 L12.8 464.6" stroke="#e8e8e8" stroke-width=".5"/><path d="M15 470.8 l1.4 1 l-1.4 1z" fill="#aaa"/>
<rect x="587.4" y="85.2" width="12.4" height="3.6" fill="#4c4c4c"/><path d="M597.4 85.6 L599.6 87 L597.4 88.4Z" fill="#000"/>
<rect x="588.2" y="90.2" width="11" height="11.6" fill="#c48a1c"/>
<path d="M590.4 96 L593.7 94.4 L597 96 L593.7 97.8Z" fill="#c4c4c4"/><path d="M590.4 97.2 L593.7 99 L597 97.2" stroke="#e8e8e8" stroke-width=".6" fill="none"/>
<path d="M591.8 108.4 V107.2 A1.9 1.9 0 0 1 595.6 107.2 V108.4" stroke="#e8e8e8" stroke-width=".9" fill="none"/><rect x="590.6" y="108.2" width="6.2" height="4.6" rx=".5" fill="#e8e8e8"/><path d="M590.6 110.6h6.2" stroke="#aaa" stroke-width=".5"/>
<path d="M592.2 118.6 L595.2 121.6 M595.2 118.6 L592.2 121.6" stroke="#aaa" stroke-width=".8"/><path d="M593.7 121.6 V126" stroke="#aaa" stroke-width="1"/>
<circle cx="593.4" cy="133.8" r="3.4" fill="#8c8c8c"/><circle cx="592.6" cy="133" r="2.6" fill="#e8e8e8"/><path d="M597.4 136.4 l1.2 .9 l-1.2 .9z" fill="#aaa"/>
<rect x="588.2" y="141" width="11" height="10.8" fill="#c48a1c"/>
<path d="M591.3 144.79999999999998 A2.1 2.1 0 1 1 595.5 144.79999999999998 C595.5 146.6 594.4 147.0 594.4 148.79999999999998 H592.4 C592.4 147.0 591.3 146.6 591.3 144.79999999999998Z" fill="#f8f8f8" stroke="#fff" stroke-width=".6"/><path d="M598 149.6 l1 .9 l-1 .9z" fill="#111"/>
<path d="M591.3 157.0 A2.1 2.1 0 1 1 595.5 157.0 C595.5 158.8 594.4 159.20000000000002 594.4 161.0 H592.4 C592.4 159.20000000000002 591.3 158.8 591.3 157.0Z" fill="#55553a" stroke="#eeeedd" stroke-width=".6"/><path d="M593.4 156.6v2.4" stroke="#eeeecc" stroke-width=".5"/><path d="M593.4 161.6v1.8" stroke="#999" stroke-width=".8"/><path d="M597.6 161 l1 .9 l-1 .9z" fill="#aaa"/>
<path d="M591.3 168.2 A2.1 2.1 0 1 1 595.5 168.2 C595.5 170.0 594.4 170.4 594.4 172.2 H592.4 C592.4 170.4 591.3 170.0 591.3 168.2Z" fill="#55553a" stroke="#eeeedd" stroke-width=".6"/><path d="M593.4 167.8v2.4" stroke="#eeeecc" stroke-width=".5"/><path d="M591 174 h5" stroke="#ddd" stroke-width="1"/><path d="M597.6 173 l1 .9 l-1 .9z" fill="#aaa"/>
<rect x="588.2" y="178.8" width="11" height="10.8" fill="#c48a1c"/>
<circle cx="593.6" cy="184.2" r="3.4" fill="#2a2a2a"/><path d="M593.6 184.2 L593.6 180.8 A3.4 3.4 0 0 1 596.8 183Z" fill="#f0f0f0"/><path d="M593.6 184.2 L590.6 186 A3.4 3.4 0 0 0 594.6 187.4Z" fill="#e0e0e0"/><path d="M597.8 187.4 l1 .9 l-1 .9z" fill="#111"/>
<path d="M590 193.2 L593 196.6 L597.4 195.4 M593 196.6 L592.6 200 M590.4 195.6 L592.4 193.4" stroke="#e0e0e0" stroke-width=".8" fill="none"/><path d="M596.4 198.4 h2.2 l-1.1 1.3z" fill="#bbb"/>
<circle cx="593.1" cy="212" r="1.3" fill="#f0f0f0"/>
<path d="M590.8 225.4 L592.4 227.6 L595.6 222.2" stroke="#e8e8e8" stroke-width=".9" fill="none"/>
<path d="M591 239.6 L595.4 234.4" stroke="#e8e8e8" stroke-width="1"/><circle cx="595.2" cy="234.8" r="1" fill="#e8e8e8"/>
<path d="M593 246.6 V251" stroke="#e8e8e8" stroke-width=".8"/><circle cx="592" cy="251.2" r="1.2" fill="#e8e8e8"/><path d="M594.6 247 l.9 -.5 v3.4 M596.4 247.4 q1.2 -.9 1.4 .4 l-1.6 2.2 h1.8" stroke="#e8e8e8" stroke-width=".55" fill="none"/>
<path d="M590.8 262.6 L594 260 L594.6 265 L592 264.6Z" fill="#e8e8e8"/><path d="M595.4 259.8 V265.4" stroke="#e8e8e8" stroke-width=".8"/>
<path d="M590.8 274.4 L594 272 L594.4 276.2 L592 276Z" fill="#e8e8e8"/><path d="M595.6 271.4 V277 M591 277.6 h5.6" stroke="#e8e8e8" stroke-width=".8"/>
<path d="M590.6 292 V284 H597.2" stroke="#e8e8e8" stroke-width=".9" fill="none"/>
<path d="M591 296.6 L596.4 303.4 M596.4 296.6 L591 303.4" stroke="#d8d8d8" stroke-width=".8"/><path d="M591 296.6 h1.6 M591 296.6 v1.6 M596.4 296.6 h-1.6 M596.4 296.6 v1.6 M591 303.4 h1.6 M591 303.4 v-1.6 M596.4 303.4 h-1.6 M596.4 303.4 v-1.6" stroke="#f0f0f0" stroke-width=".8"/>
<path d="M595.6 308.4 L593.4 312 L590.8 313.4 M593.4 312 L596 315.4" stroke="#e8e8e8" stroke-width=".9" fill="none"/>
<circle cx="593.5" cy="324.6" r="4" fill="none" stroke="#e0e0e0" stroke-width=".8"/><rect x="591.7" y="322.8" width="3.6" height="3.6" fill="#f4f4f4"/>
<text x="593.5" y="339.4" font-size="4" text-anchor="middle" fill="#b0b0b0" font-family="Liberation Sans, sans-serif" font-style="italic">x/x</text>
<rect x="588.4" y="344.2" width="10.6" height="10.8" fill="#c48a1c"/>
<rect x="590.4" y="346.4" width="6.6" height="6.4" fill="#f0f0f0"/><path d="M590.8 350 L592.6 348.4 L594 349.8 L595.4 348.6 L596.6 350 V352.4 H590.8Z" fill="#333"/><rect x="591.6" y="350.6" width="4" height="1" fill="#ddd"/>
<rect x="588.4" y="363" width="10.6" height="10.8" fill="#c48a1c"/>
<path d="M591.3 366.20000000000005 A2.1 2.1 0 1 1 595.5 366.20000000000005 C595.5 368.0 594.4 368.40000000000003 594.4 370.20000000000005 H592.4 C592.4 368.40000000000003 591.3 368.0 591.3 366.20000000000005Z" fill="#f4f4f4" stroke="#fff" stroke-width=".6"/><circle cx="593.4" cy="366.4" r=".9" fill="#c8a850"/><path d="M598 371.6 l1 .9 l-1 .9z" fill="#111"/>
<rect x="588.2" y="450.6" width="10.6" height="10.8" fill="#c48a1c"/>
<rect x="590.8" y="453.2" width="2.7" height="2.7" fill="#fff"/><rect x="594.2" y="453.2" width="2.7" height="2.7" fill="#fff"/><rect x="590.8" y="456.6" width="2.7" height="2.7" fill="#fff"/><rect x="594.2" y="456.6" width="2.7" height="2.7" fill="#fff"/>
<rect x="590" y="465" width="7.2" height="7" fill="#f2f2f2" stroke="#222" stroke-width=".6"/><path d="M591.8 467 h3.6 M593.6 470.8 V468 M592.2 469.2 L593.6 467.6 L595 469.2" stroke="#111" stroke-width=".9" fill="none"/>
</svg>
<div class="a" style="left:0;top:474.7px;width:603px;height:4px;background:#fff"></div>
<div class="a" style="left:0;top:0;width:1.3px;height:478px;background:#f2f2f2"></div>
</body></html>
